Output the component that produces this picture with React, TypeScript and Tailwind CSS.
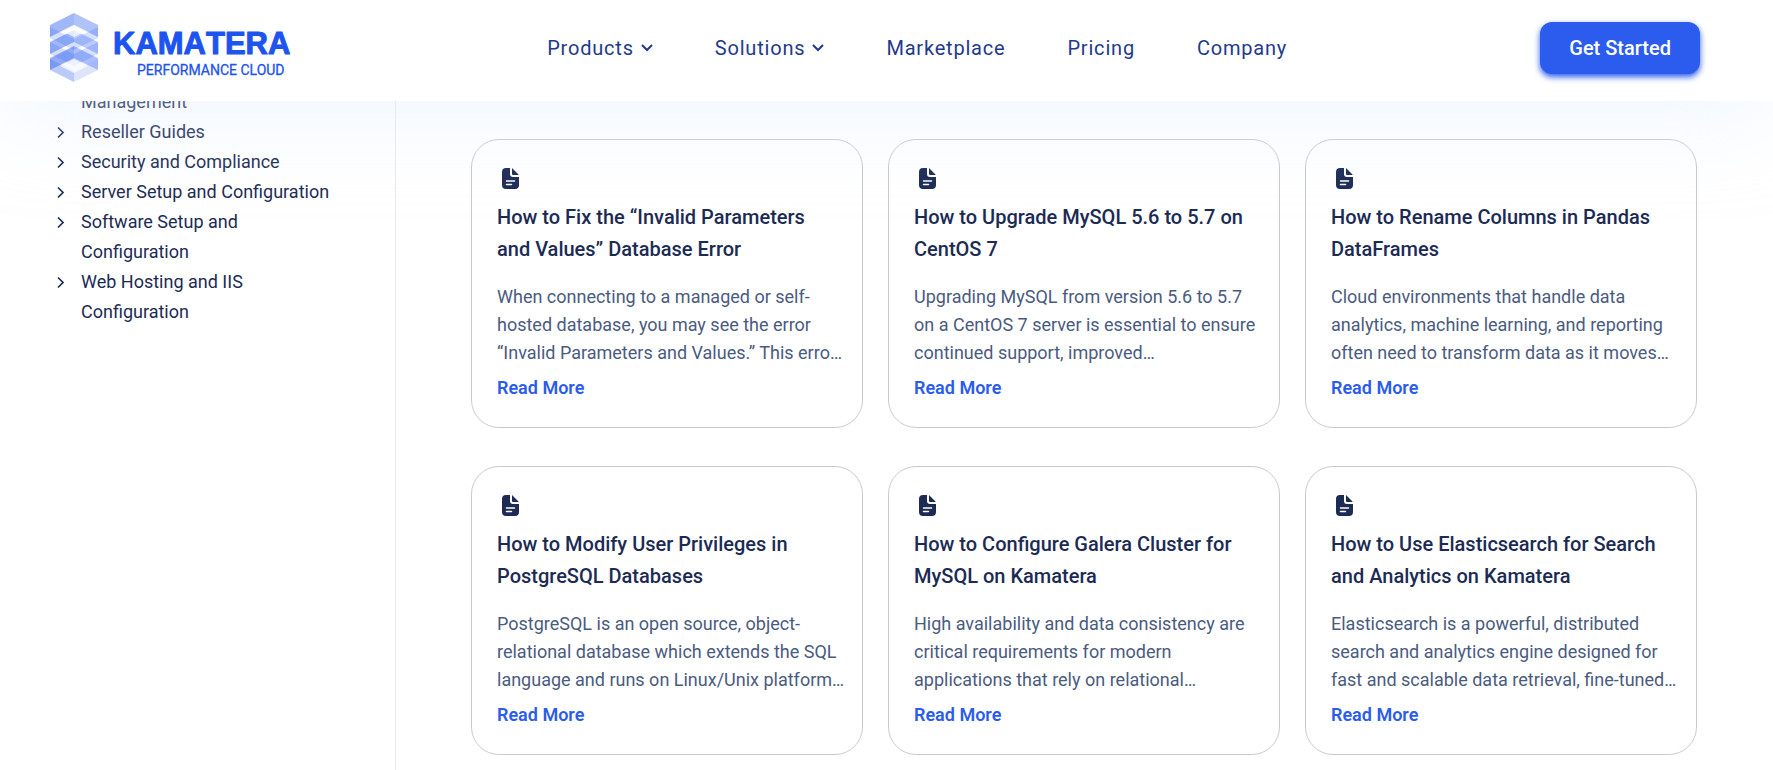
const articles = [
    {
        title: "How to Fix the “Invalid Parameters and Values” Database Error",
        excerpt: "When connecting to a managed or self-hosted database, you may see the error “Invalid Parameters and Values.” This erro…",
    },
    {
        title: "How to Upgrade MySQL 5.6 to 5.7 on CentOS 7",
        excerpt: "Upgrading MySQL from version 5.6 to 5.7 on a CentOS 7 server is essential to ensure continued support, improved…",
    },
    {
        title: "How to Rename Columns in Pandas DataFrames",
        excerpt: "Cloud environments that handle data analytics, machine learning, and reporting often need to transform data as it moves…",
    },
    {
        title: "How to Modify User Privileges in PostgreSQL Databases",
        excerpt: "PostgreSQL is an open source, object-relational database which extends the SQL language and runs on Linux/Unix platform…",
    },
    {
        title: "How to Configure Galera Cluster for MySQL on Kamatera",
        excerpt: "High availability and data consistency are critical requirements for modern applications that rely on relational…",
    },
    {
        title: "How to Use Elasticsearch for Search and Analytics on Kamatera",
        excerpt: "Elasticsearch is a powerful, distributed search and analytics engine designed for fast and scalable data retrieval, fine-tuned…",
    },
];

const categories = [
    "Reseller Guides",
    "Security and Compliance",
    "Server Setup and Configuration",
    "Software Setup and Configuration",
    "Web Hosting and IIS Configuration",
];

const Logo = () => (
    <svg width="244" height="72" viewBox="0 0 244 72" role="img" aria-label="Kamatera Performance Cloud">
        <g fill="#1d53ef">
            <path d="M0 46 24 34 48 46V57L24 69 0 57Z" opacity=".1" />
            <path d="M0 46 24 58V69L0 57Z" opacity=".22" />
            <path d="M24 58 48 46V57L24 69Z" opacity=".05" />
            <path d="M0 29 24 41 48 29V41L24 53 0 41Z" opacity=".18" />
            <path d="M0 14 24 26 48 14V25L24 37 0 25Z" opacity=".18" />
            <path d="M0 12 24 0V12L0 24Z" opacity=".42" />
            <path d="M24 0 48 12V24L24 12Z" opacity=".35" />
            <path d="M0 29 24 17V29L0 41Z" opacity=".42" />
            <path d="M24 17 48 29V41L24 29Z" opacity=".3" />
            <path d="M0 45 24 33V45L0 57Z" opacity=".42" />
            <path d="M24 33 48 45V57L24 45Z" opacity=".3" />
        </g>
        <path d="M24 12 36 18 24 24 12 18ZM24 46 38 53 24 60 10 53Z" fill="#fff" opacity=".7" />
        <text
            x="63"
            y="41"
            fontSize="31"
            fontWeight="700"
            fill="#1d53ef"
            stroke="#1d53ef"
            strokeWidth="1"
            strokeLinejoin="round"
            className="font-['Liberation_Sans',sans-serif] [font-kerning:none]"
        >
            KAMATERA
        </text>
        <text x="87" y="62" fontSize="14" fill="#1d53ef" stroke="#1d53ef" strokeWidth=".3">
            PERFORMANCE CLOUD
        </text>
    </svg>
);

const ChevronDown = () => (
    <svg width="12" height="8" viewBox="0 0 12 8" fill="none" stroke="currentColor" strokeWidth="2">
        <path d="M1 1 6 6 11 1" />
    </svg>
);

const ChevronRight = () => (
    <svg width="23" height="30" viewBox="0 0 23 30" fill="none" stroke="currentColor" strokeWidth="1.7" className="shrink-0">
        <path d="M8 10.500 13 15.500 8 20.500" />
    </svg>
);

const FileIcon = () => (
    <svg width="17" height="21" viewBox="0 0 17 21" className="ml-[5px]">
        <path
            fill="currentColor"
            d="M4 0H8V6Q8 9 11 9H17V17Q17 21 13 21H4Q0 21 0 17V4Q0 0 4 0ZM10 0 16.500 6.500V7H11Q10 7 10 6Z"
        />
        <path d="M4.500 13H12.500M4.500 16.500H9.500" stroke="#fff" strokeWidth="1.500" strokeLinecap="round" />
    </svg>
);

export default function App() {
    return (
        <div className="h-screen overflow-hidden bg-white font-['Roboto',sans-serif] text-[#1c2b54]">
            <header className="relative z-10 flex h-[101px] items-center justify-between bg-white pr-[73px] pb-[5px] pl-[50px] text-xl shadow-[0_10px_90px_rgba(222,235,255,0.5)]">
                <a href="#" className="pt-0.5">
                    <Logo />
                </a>
                <nav className="flex items-center gap-[62px] tracking-[0.04em] text-[#1f3a8a]">
                    <button className="flex items-center gap-[7px] tracking-[0.04em]">
                        Products <ChevronDown />
                    </button>
                    <button className="flex items-center gap-[7px] tracking-[0.04em]">
                        Solutions <ChevronDown />
                    </button>
                    <a href="#">Marketplace</a>
                    <a href="#">Pricing</a>
                    <a href="#">Company</a>
                </nav>
                <button className="h-[52px] rounded-xl bg-[#2b5cee] px-[29px] font-medium text-white shadow-[0_3px_6px_#2b5cee]">
                    Get Started
                </button>
            </header>

            <div className="mt-[-14px] flex">
                <aside className="w-[396px] shrink-0 border-r border-[#e8eaf0] pr-[60px] pl-[50px]">
                    <ul className="min-h-screen text-lg leading-[30px]">
                        <li className="pl-[31px]">
                            <a href="#">Management</a>
                        </li>
                        {categories.map((name) => (
                            <li key={name} className="flex gap-2">
                                <ChevronRight />
                                <a href="#">{name}</a>
                            </li>
                        ))}
                    </ul>
                </aside>

                <main className="grid flex-1 grid-cols-3 content-start gap-x-[25px] gap-y-[38px] pt-[52px] pr-[76px] pl-[75px]">
                    {articles.map((article) => (
                        <article key={article.title} className="rounded-[28px] border border-[#c8cad6] bg-white px-[25px] pt-7 pb-[25px]">
                            <FileIcon />
                            <h2 className="mt-3 text-xl leading-8 font-medium">{article.title}</h2>
                            <p className="mt-[18px] -mr-2.5 text-lg leading-7 text-[#4a5b80]">{article.excerpt}</p>
                            <a href="#" className="mt-[7px] inline-block text-lg leading-7 font-semibold text-[#2b5cee]">
                                Read More
                            </a>
                        </article>
                    ))}
                </main>
            </div>
        </div>
    );
}
